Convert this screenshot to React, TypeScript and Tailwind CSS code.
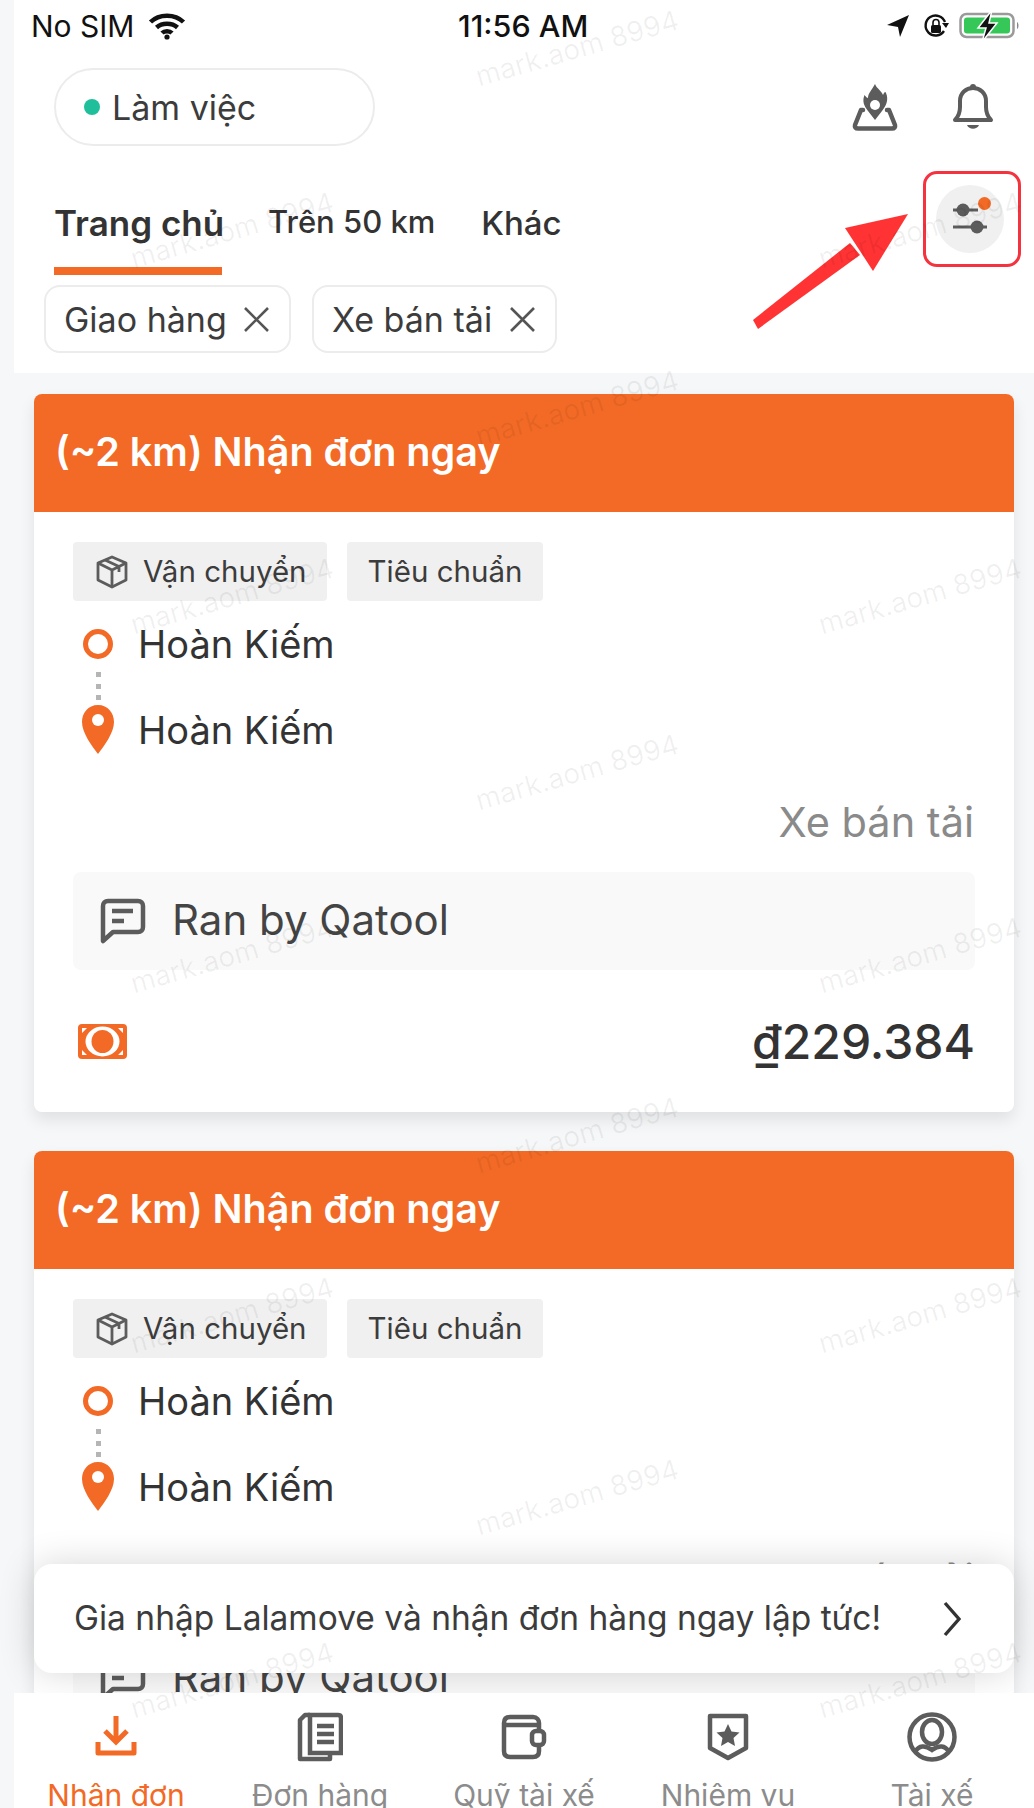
import React from "react";

const ORANGE = "#f26a25";
const GRAY = "#5c5c5c";

function Wifi() {
  return (
    <svg width="38" height="28" viewBox="0 0 38 28" fill="none" stroke="#111" strokeWidth="4.5">
      <path d="M2.5 10 C11 1.5 27 1.5 35.5 10" />
      <path d="M8.5 15.5 C14 10.5 24 10.5 29.5 15.5" />
      <path d="M14 21 C16.5 18.5 21.5 18.5 24 21" />
      <circle cx="19" cy="25" r="2.6" fill="#111" stroke="none" />
    </svg>
  );
}

function StatusRight() {
  return (
    <div className="flex items-center">
      <svg width="24" height="24" viewBox="0 0 24 24" className="mr-[12px]">
        <path d="M23 1 L1 11 L12 13 L14 23 Z" fill="#111" />
      </svg>
      <svg width="28" height="28" viewBox="0 0 28 28" fill="none" className="mr-[9px]">
        <path d="M22 19 A10 10 0 1 1 23 10" stroke="#111" strokeWidth="2.4" />
        <path d="M20 11 L27 11 L24 16 Z" fill="#111" />
        <rect x="9" y="13" width="10" height="8" rx="1.5" fill="#111" />
        <path d="M11 13 V10.5 A3 3 0 0 1 17 10.5 V13" stroke="#111" strokeWidth="1.6" />
      </svg>
      <svg width="62" height="32" viewBox="0 0 62 32" fill="none">
        <rect x="1.5" y="4" width="53" height="23" rx="6" stroke="#9a9a9a" strokeWidth="2.5" />
        <rect x="5" y="7.5" width="46" height="16" rx="3" fill="#36c759" />
        <path d="M58 12 C60 13 60 18 58 19 Z" fill="#8a8a8a" />
        <path d="M33 0 L19 18 H27 L23 32 L38 13 H30 Z" fill="#111" stroke="#fff" strokeWidth="1.5" />
      </svg>
    </div>
  );
}

function HotIcon() {
  return (
    <svg width="46" height="47" viewBox="0 0 46 47" fill="none">
      <path
        d="M23 0 C25 5 29 6 31 11 C33 7 33.5 8 34 9 C37 16 34 22 30 27 L23 36 L16 27 C12 22 10 17 12.5 11 C14 13 15 14 16 14 C16 9 20 6 23 0 Z"
        fill={GRAY}
      />
      <circle cx="23" cy="21" r="5" fill="#fff" />
      <path
        d="M11 26 L9 26 L3 41 C2.5 43 3.5 44.5 6 44.5 H40 C42.5 44.5 43.5 43 43 41 L37 26 L35 26"
        stroke={GRAY}
        strokeWidth="4.5"
        strokeLinejoin="round"
        strokeLinecap="round"
      />
    </svg>
  );
}

function BellIcon() {
  return (
    <svg width="42" height="47" viewBox="0 0 42 47" fill="none" stroke={GRAY} strokeWidth="4">
      <path d="M3 36 C7 32 8 29 8 23 V17 C8 9 14 4 21 4 C28 4 34 9 34 17 V23 C34 29 35 32 39 36 Z" strokeLinejoin="round" />
      <path d="M15 41 C17 46 25 46 27 41 Z" fill={GRAY} stroke="none" />
      <circle cx="21" cy="3" r="3" fill={GRAY} stroke="none" />
    </svg>
  );
}

function Sliders() {
  return (
    <svg width="36" height="32" viewBox="0 0 36 32" fill="none">
      <path d="M1 7 H26" stroke={GRAY} strokeWidth="3" />
      <circle cx="11" cy="7" r="6.5" fill={GRAY} />
      <path d="M1 24 H35" stroke={GRAY} strokeWidth="3" />
      <circle cx="25" cy="24" r="6.5" fill={GRAY} />
    </svg>
  );
}

function Chip({ label }: { label: string }) {
  return (
    <div className="flex h-[68px] w-full items-center justify-between rounded-[16px] border-2 border-[#ececec] bg-white pl-[18px] pr-[19px] text-[34px] text-[#3c3c3c]">
      <span>{label}</span>
      <svg width="27" height="27" viewBox="0 0 27 27" stroke="#555" strokeWidth="2.6" fill="none">
        <path d="M2 2 L25 25 M25 2 L2 25" />
      </svg>
    </div>
  );
}

function BoxIcon() {
  return (
    <svg width="34" height="34" viewBox="0 0 34 34" fill="none" stroke={GRAY} strokeWidth="2.8" strokeLinejoin="round">
      <path d="M17 2 L31 8 V25 L17 32 L3 25 V8 Z" />
      <path d="M3 8 L17 15 L31 8 M17 15 V32 M10 5 L24 11.5 V17" />
    </svg>
  );
}

function NoteIcon() {
  return (
    <svg width="46" height="46" viewBox="0 0 46 46" fill="none" stroke={GRAY} strokeWidth="4.5" strokeLinejoin="round">
      <path d="M8 3 H38 C41 3 43 5 43 8 V29 C43 32 41 34 38 34 H13 L3 43 V8 C3 5 5 3 8 3 Z" />
      <path d="M12 13 H33 M12 23 H24" />
    </svg>
  );
}

function MoneyIcon() {
  return (
    <svg width="49" height="35" viewBox="0 0 49 35">
      <rect width="49" height="35" rx="4" fill={ORANGE} />
      <ellipse cx="24.5" cy="17.5" rx="17" ry="15" fill="#fff" />
      <ellipse cx="24.5" cy="17.5" rx="11" ry="11.5" fill={ORANGE} />
      <path d="M4 4 H9 L4 9 Z M45 4 H40 L45 9 Z M4 31 H9 L4 26 Z M45 31 H40 L45 26 Z" fill="#fff" />
    </svg>
  );
}

function Pin() {
  return (
    <svg width="34" height="51" viewBox="0 0 34 51">
      <path d="M17 1 C7 1 1 9 1 18 C1 29 11 42 17 50 C23 42 33 29 33 18 C33 9 27 1 17 1 Z" fill={ORANGE} />
      <circle cx="17" cy="16" r="6" fill="#fff" />
    </svg>
  );
}

function Card() {
  return (
    <section className="overflow-hidden rounded-[8px] bg-white shadow-[0_8px_16px_rgba(0,0,0,0.09)]">
      <div className="flex h-[118px] items-center bg-[#f26a25] pl-[21px] text-[39.5px] font-semibold text-white">
        (~2 km) Nhận đơn ngay
      </div>
      <div className="px-[39px] pt-[30px] pb-[43px]">
        <div className="flex gap-[20px]">
          <div className="flex h-[59px] w-[254px] items-center gap-[14px] whitespace-nowrap rounded-[4px] bg-[#f0f0f0] pl-[22px] text-[29.5px] text-[#3c3c3c]">
            <BoxIcon />
            <span>Vận chuyển</span>
          </div>
          <div className="flex h-[59px] w-[196px] items-center justify-center rounded-[4px] bg-[#f0f0f0] text-[29.5px] text-[#3c3c3c]">
            Tiêu chuẩn
          </div>
        </div>
        <div className="mt-[18px] flex items-center gap-[15px] text-[38px] leading-[50px] text-[#333]">
          <div className="flex w-[50px] justify-center">
            <div className="h-[30px] w-[30px] rounded-full border-[5px] border-[#f26a25]" />
          </div>
          <span>Hoàn Kiếm</span>
        </div>
        <div className="ml-[23px] mt-[3px] flex h-[28px] w-[5px] flex-col justify-between">
          <div className="h-[5px] bg-[#b5b5b5]" />
          <div className="h-[5px] bg-[#b5b5b5]" />
          <div className="h-[5px] bg-[#b5b5b5]" />
        </div>
        <div className="mt-[4px] flex items-center gap-[15px] text-[38px] leading-[50px] text-[#333]">
          <div className="flex w-[50px] justify-center">
            <Pin />
          </div>
          <span>Hoàn Kiếm</span>
        </div>
        <div className="mt-[41px] pr-[1px] text-right text-[41.5px] leading-[52px] text-[#8a8a8a]">Xe bán tải</div>
        <div className="mt-[24px] flex h-[98px] items-center gap-[26px] rounded-[8px] bg-[#f9f9f9] pl-[27px] text-[42px] text-[#444]">
          <NoteIcon />
          <span className="pb-[4px]">Ran by Qatool</span>
        </div>
        <div className="mt-[44px] flex items-center justify-between pl-[5px]">
          <MoneyIcon />
          <span className="pt-[1px] text-[48px] font-medium leading-[54px] text-[#333]">₫229.384</span>
        </div>
      </div>
    </section>
  );
}

function Tab({ icon, label, active }: { icon: React.ReactNode; label: string; active?: boolean }) {
  return (
    <div className="flex flex-col items-center">
      <div className="flex h-[52px] items-center">{icon}</div>
      <div className={`mt-[14px] whitespace-nowrap text-[30px] leading-[36px] ${active ? "text-[#f26a25]" : "text-[#8c8c8c]"}`}>
        {label}
      </div>
    </div>
  );
}

const marks = [
  [577, 48], [232, 230], [920, 230],
  [577, 408], [232, 596], [920, 596],
  [577, 772], [232, 955], [920, 955],
  [577, 1135], [232, 1315], [920, 1315],
  [577, 1497], [232, 1680], [920, 1680],
];

export default function App() {
  return (
    <div className="relative h-[1808px] w-[1034px] overflow-hidden bg-[#f6f7f8] font-['Inter',sans-serif]">
      <header className="ml-[14px] h-[373px] bg-white">
        <div className="relative flex h-[50px] items-center justify-between pl-[17px] pr-[13px] pt-[2px] text-[30px] text-[#111]">
          <div className="flex items-center gap-[14px]">
            <span>No SIM</span>
            <Wifi />
          </div>
          <span className="absolute left-[444px] text-[30.5px] font-medium">11:56 AM</span>
          <StatusRight />
        </div>
        <div className="mt-[18px] flex items-center justify-between pl-[40px] pr-[40px]">
          <div className="flex h-[78px] w-[321px] items-center gap-[12px] rounded-full border-2 border-[#ececec] pl-[28px] text-[34px] text-[#3c3c3c]">
            <span className="h-[16px] w-[16px] rounded-full bg-[#1fbf9c]" />
            <span>Làm việc</span>
          </div>
          <div className="flex items-center gap-[54px]">
            <HotIcon />
            <BellIcon />
          </div>
        </div>
        <div className="relative mt-[25px] flex h-[104px] pl-[40px]">
          <div className="relative w-[168px] pt-[31px] text-center text-[35px] font-semibold leading-[42px] text-[#333]">
            <span className="whitespace-nowrap">Trang chủ</span>
            <div className="absolute inset-x-0 bottom-0 h-[8px] bg-[#f26a25]" />
          </div>
          <div className="ml-[46px] pt-[30px] text-[31px] font-medium leading-[42px] text-[#333]">Trên 50 km</div>
          <div className="ml-[46px] pt-[31px] text-[33px] font-medium leading-[42px] text-[#333]">Khác</div>
        </div>
        <div className="mt-[10px] flex gap-[21px] pl-[30px]">
          <div className="w-[247px]">
            <Chip label="Giao hàng" />
          </div>
          <div className="w-[245px]">
            <Chip label="Xe bán tải" />
          </div>
        </div>
      </header>

      <main className="flex flex-col gap-[39px] pl-[34px] pr-[20px] pt-[21px]">
        <Card />
        <Card />
      </main>

      {/* highlighted filter button with its annotation */}
      <div className="absolute left-[923px] top-[171px] flex h-[96px] w-[98px] items-center justify-center rounded-[14px] border-[3px] border-[#f5333f] pr-[4px]">
        <div className="relative flex h-[68px] w-[68px] shrink-0 items-center justify-center rounded-full bg-[#f0f0f0]">
          <Sliders />
          <span className="absolute right-[13px] top-[12px] h-[13px] w-[13px] rounded-full bg-[#f26a25]" />
        </div>
      </div>
      <svg className="absolute left-[750px] top-[205px]" width="170" height="125" viewBox="0 0 170 125">
        <path d="M3 115 L8 124 L110 50 L100 38 Z" fill="#ff3333" />
        <path d="M158 9 L95 23 L123 66 Z" fill="#ff3333" />
      </svg>

      {/* toast */}
      <div className="absolute left-[34px] top-[1564px] flex h-[109px] w-[980px] items-center justify-between rounded-[18px] bg-white pl-[40px] pr-[53px] text-[33.5px] text-[#3c3c3c] shadow-[0_0_36px_rgba(0,0,0,0.16)]">
        <span>Gia nhập Lalamove và nhận đơn hàng ngay lập tức!</span>
        <svg width="18" height="36" viewBox="0 0 18 36" fill="none" stroke="#333" strokeWidth="3.4">
          <path d="M2 2 L16 18 L2 34" />
        </svg>
      </div>

      {/* bottom navigation */}
      <nav className="absolute bottom-0 left-[14px] right-0 grid h-[115px] grid-cols-5 bg-white pt-[18px]">
        <Tab
          active
          label="Nhận đơn"
          icon={
            <svg width="42" height="42" viewBox="0 0 42 42" fill="none" stroke={ORANGE} strokeWidth="5">
              <path d="M21 0 V24 M10 15 L21 26 L32 15" />
              <path d="M3 26 V37 H39 V26" strokeLinejoin="round" />
            </svg>
          }
        />
        <Tab
          label="Đơn hàng"
          icon={
            <svg width="46" height="50" viewBox="0 0 46 50" fill="none" stroke={GRAY} strokeWidth="4.5">
              <path d="M13 3 H41 C43 3 44 4 44 6 V41 H13 Z" />
              <path d="M13 3 H8 L3 8 V47 H33 V41" strokeLinejoin="round" />
              <path d="M20 14 H37 M20 22 H37 M20 30 H37" />
            </svg>
          }
        />
        <Tab
          label="Quỹ tài xế"
          icon={
            <svg width="46" height="46" viewBox="0 0 46 46" fill="none" stroke={GRAY} strokeWidth="4.5">
              <path d="M3 9 C3 5 5 3 9 3 H32 C36 3 38 6 38 9 V17 M3 11 H38 V17 M3 9 V37 C3 41 5 43 9 43 H32 C36 43 38 41 38 37 V31" />
              <rect x="31" y="17" width="12" height="14" rx="4" />
            </svg>
          }
        />
        <Tab
          label="Nhiệm vụ"
          icon={
            <svg width="42" height="48" viewBox="0 0 42 48" fill="none" stroke={GRAY} strokeWidth="4.5">
              <path d="M3 3 H39 V35 L21 45 L3 35 Z" strokeLinejoin="round" />
              <path
                d="M21 11 L24.5 18.5 L32.5 19.5 L26.5 25 L28 33 L21 29 L14 33 L15.5 25 L9.5 19.5 L17.5 18.5 Z"
                fill={GRAY}
                stroke="none"
              />
            </svg>
          }
        />
        <Tab
          label="Tài xế"
          icon={
            <svg width="50" height="50" viewBox="0 0 50 50" fill="none" stroke={GRAY} strokeWidth="4.5">
              <circle cx="25" cy="25" r="22.5" />
              <ellipse cx="25" cy="20" rx="10" ry="12" />
              <path d="M8 40 C12 33 18 33 25 38 C32 33 38 33 42 40" />
            </svg>
          }
        />
      </nav>

      {/* watermark */}
      {marks.map(([x, y], i) => (
        <span
          key={i}
          className="pointer-events-none absolute -translate-x-1/2 -translate-y-1/2 -rotate-[16deg] whitespace-nowrap text-[28px] text-[rgba(0,0,0,0.06)]"
          style={{ left: x, top: y }}
        >
          mark.aom 8994
        </span>
      ))}
    </div>
  );
}
